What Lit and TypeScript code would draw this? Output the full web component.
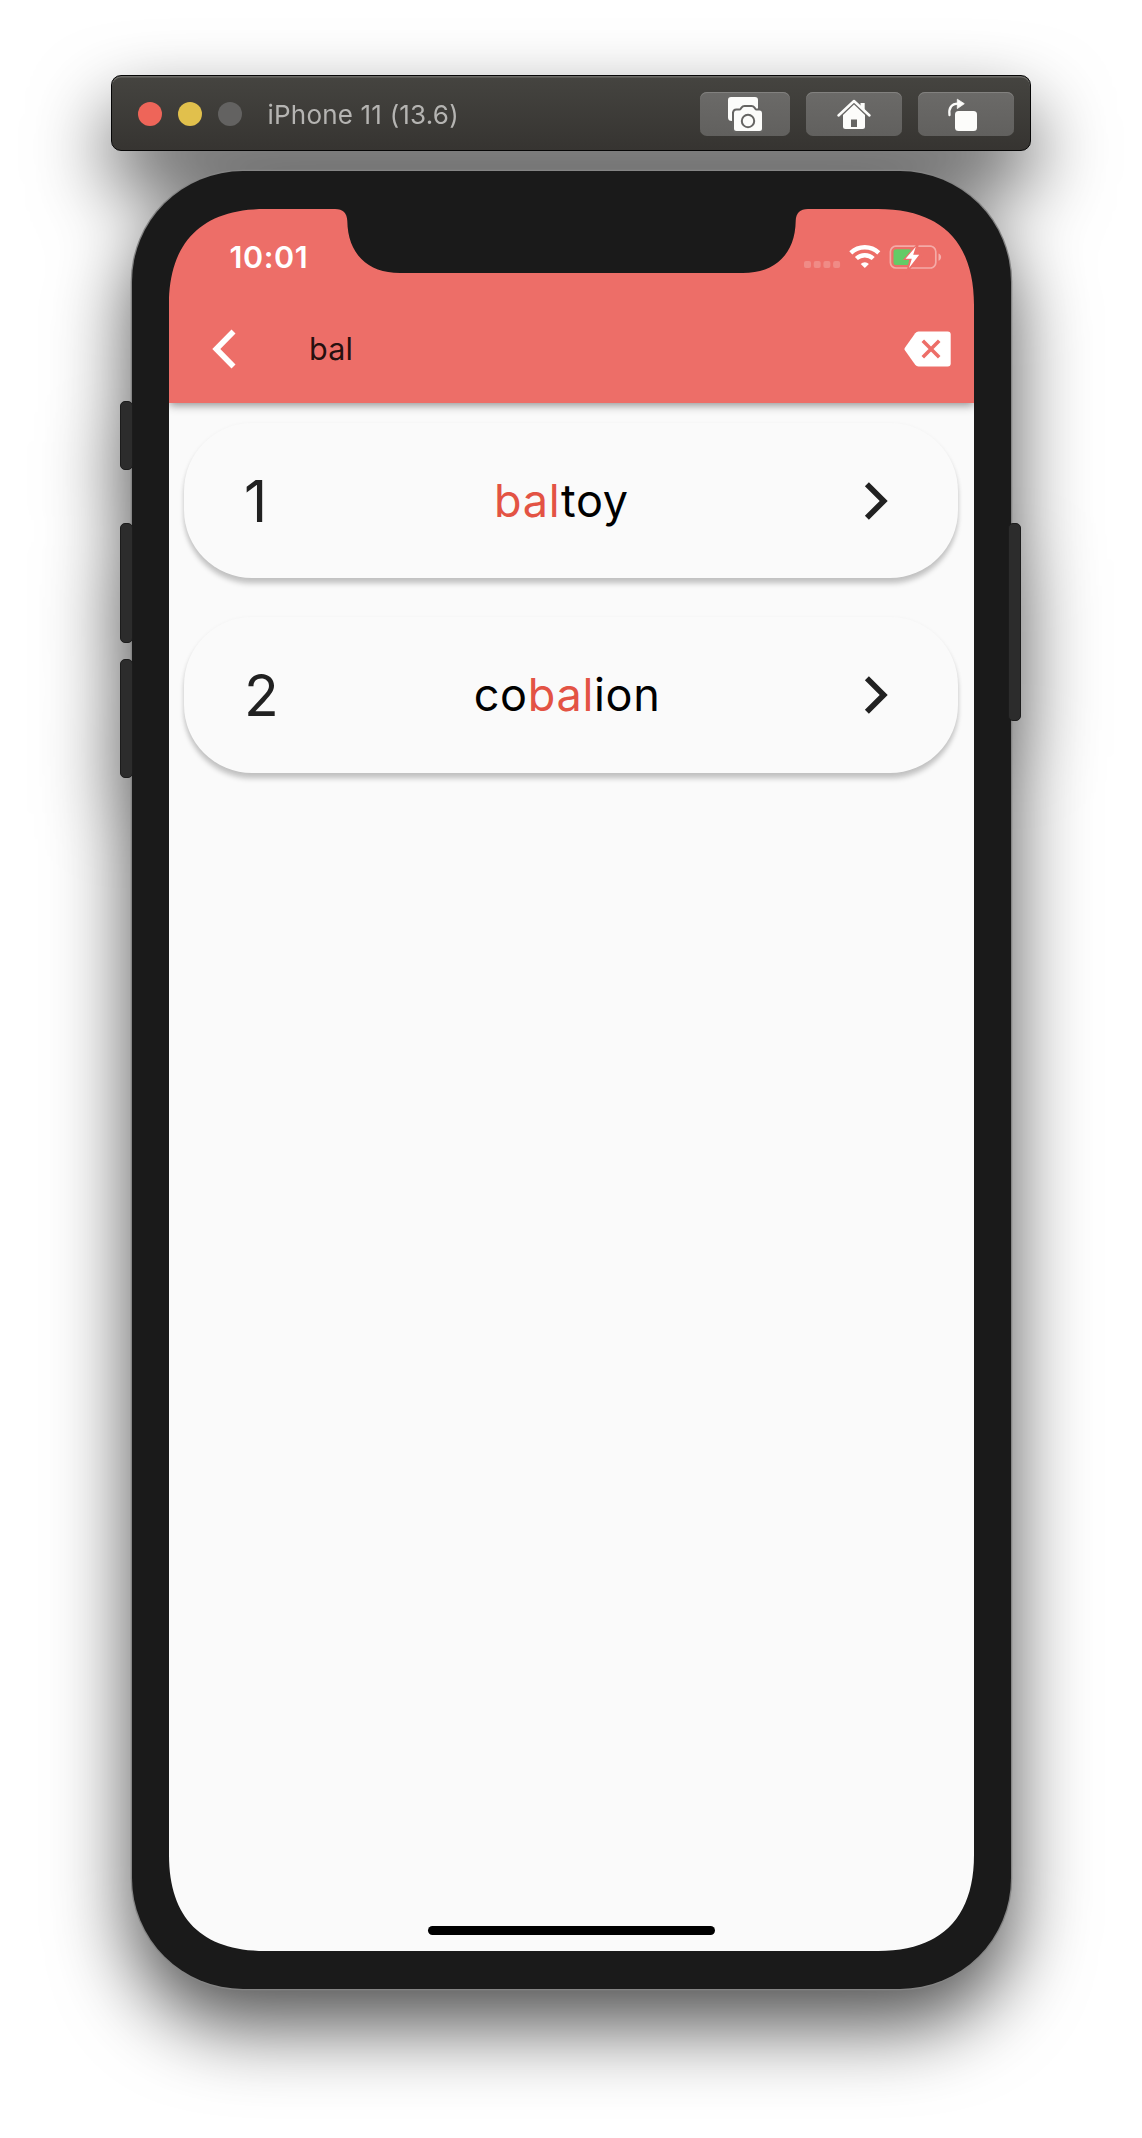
import { LitElement, html, css, svg, unsafeCSS } from "lit";
import { customElement, property } from "lit/decorators.js";

const W = 805;
const H = 1742;

/** Outline of the display: smooth corners reaching `a` along each edge, plus the sensor notch. */
function screenOutline(a: number, k: number): string {
  const m = (x: number) => W - x;
  return [
    `M${a} 0 L166 0 C174 0 178 4 178.3 12 C178.8 44 198 64 231 64`,
    `L${m(231)} 64 C${m(198)} 64 ${m(178.8)} 44 ${m(178.3)} 12 C${m(178)} 4 ${m(174)} 0 ${m(166)} 0`,
    `L${W - a} 0 C${W - k} 0 ${W} ${k} ${W} ${a}`,
    `L${W} ${H - a} C${W} ${H - k} ${W - k} ${H} ${W - a} ${H}`,
    `L${a} ${H} C${k} ${H} 0 ${H - k} 0 ${H - a}`,
    `L0 ${a} C0 ${k} ${k} 0 ${a} 0 Z`,
  ].join(" ");
}

const sans = css`Inter, "Liberation Sans", sans-serif`;

@customElement("window-bar")
class WindowBar extends LitElement {
  static styles = css`
    :host {
      display: flex;
      align-items: center;
      box-sizing: border-box;
      width: 920px;
      height: 76px;
      padding: 1px 16px 0 26px;
      border: 1px solid #060606;
      border-radius: 10px;
      background: linear-gradient(#454440, #363431);
      box-shadow: inset 0 1.5px 0 #6c6b67;
      font-family: ${sans};
    }
    .light { width: 24px; height: 24px; border-radius: 50%; margin-right: 16px; }
    .close { background: #ee6559; }
    .min { background: #e1c04c; }
    .max { background: #636261; }
    .title { flex: 1; margin: 2px 0 0 9.5px; font-size: 26px; letter-spacing: 0.2px; color: #b5b4b2; white-space: nowrap; }
    .btn {
      width: 96px;
      height: 44px;
      margin-left: 16px;
      border-radius: 7px;
      background: linear-gradient(#6b6a68, #61605e);
      box-shadow: inset 0 1px 0 #82817f;
    }
    .narrow { width: 90px; }
    svg { display: block; }
  `;
  render() {
    return html`
      <div class="light close"></div>
      <div class="light min"></div>
      <div class="light max"></div>
      <div class="title">iPhone 11 (13.6)</div>
      <div class="btn narrow">
        <svg width="90" height="44" viewBox="0 0 90 44" fill="#fcfcfa">
          <path d="M31 5H55Q58 5 58 8V20H32V29Q28 29 28 25.500V8Q28 5 31 5Z"/>
          <path d="M36.500 18.500H39.500Q40.800 18.500 41.600 17.300L42.300 16.200Q43.200 15 44.500 15H51.500Q52.800 15 53.700 16.200L54.400 17.300Q55.200 18.500 56.500 18.500H59.500Q62 18.500 62 21.500V36.500Q62 39 59.500 39H36.500Q34 39 34 36.500V21.500Q34 18.500 36.500 18.500Z" stroke="#666563" stroke-width="4" paint-order="stroke"/>
          <circle cx="48" cy="29" r="6.200" fill="none" stroke="#666563" stroke-width="2"/>
        </svg>
      </div>
      <div class="btn">
        <svg width="96" height="44" viewBox="0 0 96 44" fill="#fcfcfa">
          <path d="M32.500 23.500L48 9L63.500 23.500" fill="none" stroke="#fcfcfa" stroke-width="2.500" stroke-linecap="round" stroke-linejoin="round"/>
          <path d="M54.500 11H58.700V19L54.500 15Z"/>
          <path d="M48 12.600L59 23V34.500Q59 37 56.500 37H39.500Q37 37 37 34.500V23Z"/>
          <path d="M45 27.500H51V35H45Z" fill="#666563"/>
        </svg>
      </div>
      <div class="btn">
        <svg width="96" height="44" viewBox="0 0 96 44" fill="#fcfcfa">
          <rect x="37" y="19" width="22" height="20" rx="3.500"/>
          <path d="M31.500 23C30.500 16 33.500 11.700 40 11.700" fill="none" stroke="#fcfcfa" stroke-width="2.300" stroke-linecap="round"/>
          <path d="M39.300 7.200L46.300 11.700L39.300 16.600Z" stroke="#fcfcfa" stroke-width="0.800" stroke-linejoin="round"/>
        </svg>
      </div>
    `;
  }
}

@customElement("status-bar")
class StatusBar extends LitElement {
  static styles = css`
    :host {
      display: flex;
      justify-content: space-between;
      align-items: flex-start;
      height: 86px;
      box-sizing: border-box;
      padding: 30px 32px 0 60.5px;
      font-family: ${sans};
    }
    .time { font-size: 30.5px; line-height: 36px; font-weight: 600; color: #fff; letter-spacing: 0.6px; }
    svg { display: block; }
  `;
  render() {
    return html`
      <span class="time">10:01</span>
      <svg width="138" height="36" viewBox="0 0 138 36">
        ${[0, 1, 2, 3].map((i) => svg`<rect x=${i * 9.7} y="22" width="7" height="7" rx="2" fill="#fff" opacity="0.200"/>`)}
        <g fill="none" stroke="#fff">
          <path d="M46.800 13.800A20.400 20.400 0 0 1 74.800 13.800" stroke-width="4.400"/>
          <path d="M52.400 19.500A12.400 12.400 0 0 1 69.200 19.500" stroke-width="4.400"/>
        </g>
        <path d="M60.800 29L56.700 24.900A5.800 5.800 0 0 1 64.900 24.900Z" fill="#fff"/>
        <rect x="86.400" y="7.200" width="45.400" height="21.800" rx="5.500" fill="none" stroke="#fff" stroke-opacity="0.420" stroke-width="1.700"/>
        <path d="M134.500 14.500C138 15.500 138 20.700 134.500 21.700Z" fill="#fff" opacity="0.450"/>
        <rect x="89.500" y="10.300" width="18" height="15.800" rx="2.500" fill="#64cb66"/>
        <path d="M113.700 5.500L101 20H106.500L103.800 31L117 17H111.300Z" fill="#ed6e68" stroke="#ed6e68" stroke-width="2"/>
        <path d="M111.800 7.800L101.500 19.800H107.800L105 29L115.200 15.800H109.200Z" fill="#fff"/>
      </svg>
    `;
  }
}

@customElement("search-bar")
class SearchBar extends LitElement {
  @property() query = "";
  static styles = css`
    :host {
      display: flex;
      align-items: center;
      height: 108.400px;
      box-sizing: border-box;
      padding: 0 22px 0 42.500px;
      font-family: ${sans};
    }
    .field { flex: 1; margin-left: 73.500px; font-size: 30.500px; line-height: 40px; letter-spacing: 0.200px; color: rgba(0, 0, 0, 0.870); }
    svg { display: block; }
  `;
  render() {
    return html`
      <svg width="24" height="40" viewBox="0 0 24 40"><path d="M0.300 20L19.500 0.600L23.500 4.600L8.300 20L23.500 35.400L19.500 39.400Z" fill="#fff"/></svg>
      <span class="field">${this.query}</span>
      <svg width="48" height="36" viewBox="0 0 48 36">
        <path d="M14.500 0.500H43.700Q46.700 0.500 46.700 3.500V32.500Q46.700 35.500 43.700 35.500H14.500Q12.500 35.500 11.200 33.700L0.900 19.300Q0 18 0.900 16.700L11.200 2.300Q12.500 0.500 14.500 0.500Z" fill="#fff"/>
        <path d="M18.800 9.800L35.200 26.200M35.200 9.800L18.800 26.200" stroke="#ed6e68" stroke-width="3.600"/>
      </svg>
    `;
  }
}

@customElement("result-card")
class ResultCard extends LitElement {
  @property() index = "";
  @property() name = "";
  @property() query = "";
  static styles = css`
    :host {
      display: flex;
      align-items: center;
      justify-content: space-between;
      box-sizing: border-box;
      height: 155.500px;
      margin: 19.440px 16px 19.440px 15px;
      padding: 0 69.500px 0 60px;
      border-radius: 68px;
      background: #fafafa;
      box-shadow: 0 6px 5px rgba(0, 0, 0, 0.180), 0 2px 5px rgba(0, 0, 0, 0.080);
      font-family: ${sans};
    }
    .index { padding-top: 2px; font-size: 57px; color: #212121; }
    .name { margin-right: 9px; font-size: 45px; letter-spacing: 0.700px; color: #000; white-space: nowrap; }
    .hit { color: #e35344; }
    svg { display: block; }
  `;
  render() {
    const at = this.name.indexOf(this.query);
    const end = at + this.query.length;
    return html`
      <span class="index">${this.index}</span>
      <span class="name">${this.name.slice(0, at)}<span class="hit">${this.name.slice(at, end)}</span>${this.name.slice(end)}</span>
      <svg width="24" height="38" viewBox="0 0 24 38"><path d="M23.700 19L4.900 0.200L0.900 4.200L15.700 19L0.900 33.800L4.900 37.800Z" fill="#212121"/></svg>
    `;
  }
}

@customElement("app-root")
class AppRoot extends LitElement {
  static styles = css`
    :host { display: block; width: 1142px; height: 2138px; overflow: hidden; background: #fff; }
    .stage {
      display: flex;
      flex-direction: column;
      box-sizing: border-box;
      height: 2138px;
      padding-top: 75px;
      filter: drop-shadow(0 36px 39px rgba(0, 0, 0, 0.680));
    }
    window-bar { margin-left: 111px; }
    .phone {
      position: relative;
      box-sizing: border-box;
      width: 879px;
      height: 1818px;
      margin: 20px 0 0 132px;
      padding: 38px 37px;
      border-radius: 111px;
      background: #1a1a1a;
      box-shadow: 0 0 0 1.300px #858585;
    }
    .key {
      position: absolute;
      box-sizing: border-box;
      width: 13px;
      border: 1.500px solid #1c1c1c;
      border-radius: 5px;
      background: #2c2c2c;
    }
    .left { left: -12px; }
    .right { right: -10px; }
    .mute { top: 230px; height: 69px; }
    .up { top: 352px; height: 120px; }
    .down { top: 488px; height: 119px; }
    .power { top: 352px; height: 198px; }
    .screen {
      display: flex;
      flex-direction: column;
      width: 805px;
      height: 1742px;
      background: #fafafa;
      clip-path: path("${unsafeCSS(screenOutline(96, 33))}");
    }
    .header { background: #ed6e68; box-shadow: 0 2px 9px rgba(0, 0, 0, 0.450); }
    .list { flex: 1; display: flex; flex-direction: column; }
    .indicator { align-self: center; width: 287px; height: 9.500px; margin-bottom: 15.700px; border-radius: 5px; background: #000; }
  `;
  render() {
    const query = "bal";
    return html`
      <div class="stage">
        <window-bar></window-bar>
        <div class="phone">
          <div class="key left mute"></div>
          <div class="key left up"></div>
          <div class="key left down"></div>
          <div class="key right power"></div>
          <div class="screen">
            <div class="header">
              <status-bar></status-bar>
              <search-bar .query=${query}></search-bar>
            </div>
            <div class="list">
              ${["baltoy", "cobalion"].map(
                (name, i) => html`<result-card .index=${String(i + 1)} .name=${name} .query=${query}></result-card>`
              )}
            </div>
            <div class="indicator"></div>
          </div>
        </div>
      </div>
    `;
  }
}
